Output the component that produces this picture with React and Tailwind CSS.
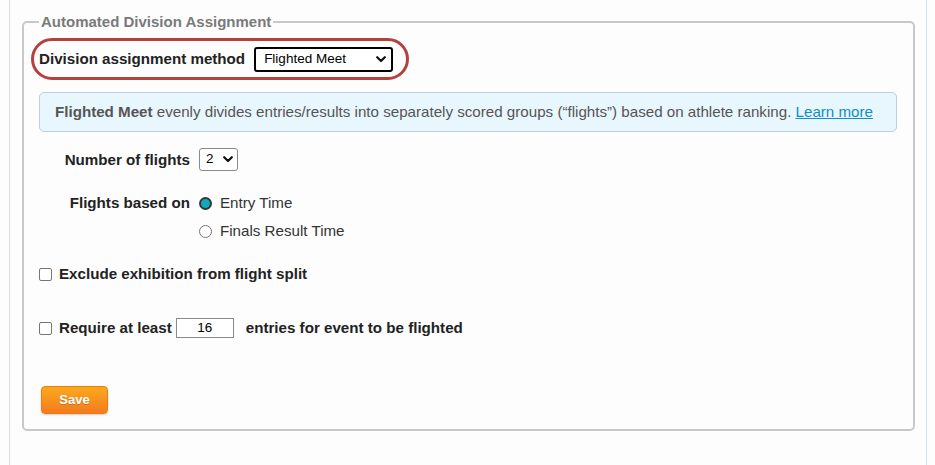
import React from "react";

const Chevron = () => (
  <svg width="10" height="7" viewBox="0 0 10 7">
    <path d="M1.2 1.2 L5 5 L8.8 1.2" fill="none" stroke="#111" strokeWidth="2.2" strokeLinecap="round" strokeLinejoin="round" />
  </svg>
);

export default function App() {
  return (
    <div className="min-h-[465px] w-[935px] bg-[#fdfdfd] font-['Liberation_Sans',Arial,sans-serif] text-[15.15px] text-[#333]">
      <div className="ml-[9px] w-[918px] min-h-[465px] border-l border-l-[#dcdcdc] border-r border-r-[#d3e2ea] pl-[12px] pr-[11px] pt-[13px]">
        <fieldset className="border-2 border-[#c8c8c8] rounded-[5px] pl-[15px] pr-[16px] pb-[15px] pt-0">
          <legend className="ml-0 px-[2px] text-[15px] font-bold text-[#7a7a7a] leading-[18px]">
            Automated Division Assignment
          </legend>

          <div className="mt-[7px] -ml-[8px] inline-flex h-[42px] w-[378px] items-center rounded-full border-[3px] border-[#b5413f] pl-[5px]">
            <span className="font-bold text-[#222] leading-[18px]">Division assignment method</span>
            <div className="ml-[9px] flex h-[25px] w-[139px] items-center justify-between rounded-[3px] border-2 border-black bg-white pl-[8px] pr-[5px] text-[13.5px] text-black">
              <span>Flighted Meet</span>
              <Chevron />
            </div>
          </div>

          <div className="mt-[12px] flex h-[40px] items-center rounded-[5px] border border-[#b9d2de] bg-[#e8f6fd] pl-[15px] text-[#555]">
            <span className="leading-[18px]">
              <b className="font-bold">Flighted Meet</b> evenly divides entries/results into separately scored groups (“flights”) based on athlete ranking.{" "}
              <a className="text-[#0f8fc6] underline">Learn more</a>
            </span>
          </div>

          <div className="mt-[16px] flex h-[23px] items-center">
            <span className="w-[151px] text-right font-bold text-[#222] leading-[18px]">Number of flights</span>
            <div className="ml-[9px] flex h-[23px] w-[39px] items-center justify-between rounded-[3px] border border-[#8a8a8a] bg-white pl-[6px] pr-[4px] text-[13.5px] text-black">
              <span>2</span>
              <Chevron />
            </div>
          </div>

          <div className="mt-[23px] flex items-start">
            <span className="w-[151px] text-right font-bold text-[#222] leading-[18px]">Flights based on</span>
            <div className="ml-[9px] flex flex-col gap-[10px]">
              <label className="flex h-[18px] items-center gap-[8px] leading-[18px]">
                <span className="h-[13px] w-[13px] rounded-full border-[2.5px] border-[#2d3a3d] bg-[#12a9b8]" />
                <span className="text-[#333]">Entry Time</span>
              </label>
              <label className="flex h-[18px] items-center gap-[8px] leading-[18px]">
                <span className="h-[13px] w-[13px] rounded-full border border-[#767676] bg-white" />
                <span className="text-[#333]">Finals Result Time</span>
              </label>
            </div>
          </div>

          <div className="mt-[25px] flex h-[18px] items-center">
            <span className="h-[13px] w-[13px] rounded-[2px] border border-[#767676] bg-white" />
            <span className="ml-[7px] font-bold text-[#222] leading-[18px]">Exclude exhibition from flight split</span>
          </div>

          <div className="mt-[35px] flex h-[20px] items-center">
            <span className="h-[13px] w-[13px] rounded-[2px] border border-[#767676] bg-white" />
            <span className="ml-[7px] font-bold text-[#222] leading-[18px]">Require at least</span>
            <div className="ml-[4px] flex h-[20px] w-[58px] items-center justify-center border border-[#8a8a8a] bg-white text-[13.5px] text-black">16</div>
            <span className="ml-[12px] font-bold text-[#222] leading-[18px]">entries for event to be flighted</span>
          </div>

          <div className="mt-[48px]">
            <button className="ml-[2px] flex h-[28px] w-[67px] items-center justify-center rounded-[4px] border border-[#e8800f] bg-gradient-to-b from-[#fba81c] to-[#f47b20] text-[13px] font-bold text-white shadow-[0_1px_2px_rgba(0,0,0,0.2)] [text-shadow:0_1px_1px_rgba(0,0,0,0.2)]">
              Save
            </button>
          </div>
        </fieldset>
      </div>
    </div>
  );
}
